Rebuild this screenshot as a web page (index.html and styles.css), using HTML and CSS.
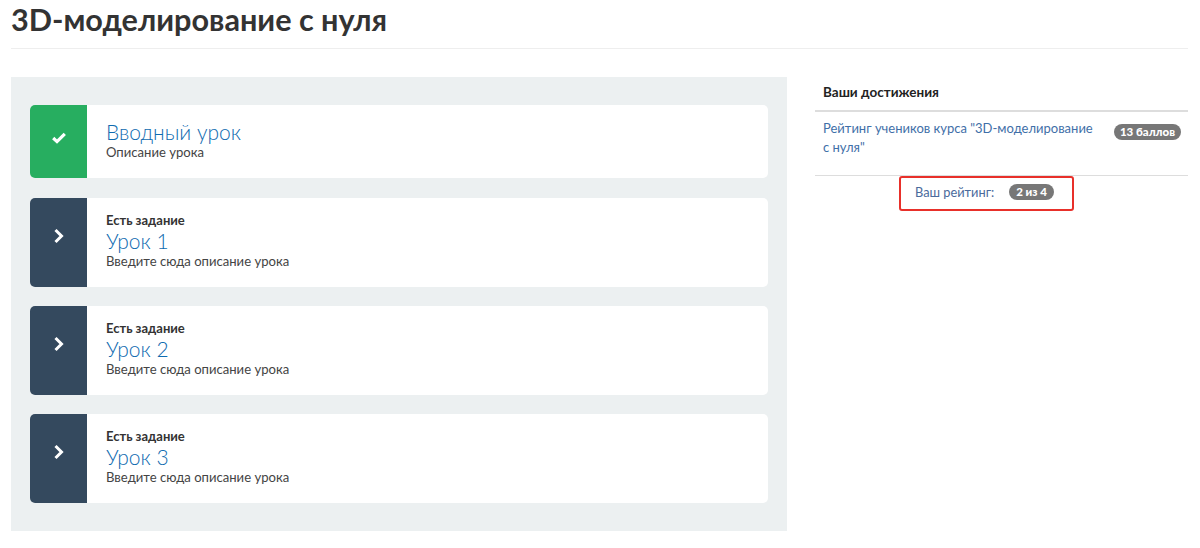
FILE: index.html
```html
<!DOCTYPE html>
<html lang="ru">
<head>
<meta charset="utf-8">
<title>3D-моделирование с нуля</title>
<link rel="stylesheet" href="styles.css">
</head>
<body>
<header class="page-header"><h1>3D-моделирование с нуля</h1></header>
<div class="columns">
  <main class="lessons">
    <a class="card">
      <span class="card-icon done"><svg width="14" height="12" viewBox="0 0 14 12"><path d="M1.2 6 5 9.6 12.8 1.8" fill="none" stroke="#fff" stroke-width="3.2"/></svg></span>
      <span class="card-body">
        <span class="card-title">Вводный урок</span>
        <span class="card-desc">Описание урока</span>
      </span>
    </a>
    <a class="card tall">
      <span class="card-icon"><svg width="12" height="16" viewBox="0 0 12 16"><path d="M2.5 2 8.5 8 2.5 14" fill="none" stroke="#fff" stroke-width="3"/></svg></span>
      <span class="card-body">
        <span class="card-task">Есть задание</span>
        <span class="card-title">Урок 1</span>
        <span class="card-desc">Введите сюда описание урока</span>
      </span>
    </a>
    <a class="card tall">
      <span class="card-icon"><svg width="12" height="16" viewBox="0 0 12 16"><path d="M2.5 2 8.5 8 2.5 14" fill="none" stroke="#fff" stroke-width="3"/></svg></span>
      <span class="card-body">
        <span class="card-task">Есть задание</span>
        <span class="card-title">Урок 2</span>
        <span class="card-desc">Введите сюда описание урока</span>
      </span>
    </a>
    <a class="card tall">
      <span class="card-icon"><svg width="12" height="16" viewBox="0 0 12 16"><path d="M2.5 2 8.5 8 2.5 14" fill="none" stroke="#fff" stroke-width="3"/></svg></span>
      <span class="card-body">
        <span class="card-task">Есть задание</span>
        <span class="card-title">Урок 3</span>
        <span class="card-desc">Введите сюда описание урока</span>
      </span>
    </a>
  </main>
  <aside class="side">
    <div class="side-head">Ваши достижения</div>
    <div class="side-row">
      <a class="side-link">Рейтинг учеников курса <span class="nowrap">"3D-моделирование</span> с нуля"</a>
      <span class="badge">13 баллов</span>
    </div>
    <div class="rating-wrap">
      <div class="rating">
        <span class="rating-label">Ваш рейтинг:</span>
        <span class="badge small">2 из 4</span>
      </div>
    </div>
  </aside>
</div>
</body>
</html>
```
FILE: styles.css
```css
* { box-sizing: border-box; }
html, body { margin: 0; background: #fff; }
body {
  padding: 0 12px 0 11px;
  height: 548px;
  overflow: hidden;
  font-family: "Lato", "Open Sans", "Noto Sans", sans-serif;
  color: #333;
}
.page-header {
  height: 49px;
  border-bottom: 1px solid #eeeeee;
}
h1 {
  margin: 0;
  padding-top: 2px;
  font-size: 30.6px;
  line-height: 36px;
  font-weight: 700;
  color: #333;
}
.columns {
  display: flex;
  margin-top: 28px;
  gap: 28px;
}
.lessons {
  width: 776px;
  height: 454px;
  flex: none;
  background: #ecf0f1;
  padding: 28px 19px;
  display: flex;
  flex-direction: column;
  gap: 19px;
}
.card {
  display: flex;
  height: 73px;
  background: #fff;
  border-radius: 5px;
  overflow: hidden;
}
.card:first-child { margin-bottom: 1px; }
.card.tall { height: 89px; }
.card-icon {
  flex: none;
  width: 57px;
  background: #34495e;
  display: flex;
  align-items: center;
  justify-content: center;
  padding-bottom: 13px;
}
.card-icon.done { background: #27ae60; padding-bottom: 8px; }
.card-body {
  display: flex;
  flex-direction: column;
  justify-content: center;
  padding-left: 19px;
  padding-bottom: 3px;
}
.card:first-child .card-body { padding-bottom: 5px; }
.card-task {
  font-size: 13px;
  line-height: 15px;
  font-weight: 700;
  color: #333;
}
.card-title {
  font-size: 21px;
  line-height: 25px;
  font-weight: 300;
  color: #0f6bb0;
  margin-bottom: 1px;
}
.card-desc {
  font-size: 13.1px;
  line-height: 15px;
  color: #444;
}
.side { width: 373px; flex: none; }
.side-head {
  height: 35px;
  padding: 6px 8px 0;
  font-size: 13.5px;
  line-height: 18px;
  font-weight: 700;
  color: #222;
  border-bottom: 2px solid #ddd;
}
.side-row {
  display: flex;
  justify-content: space-between;
  align-items: flex-start;
  height: 64px;
  padding: 7px 7px 0 8px;
  border-bottom: 1px solid #ddd;
}
.side-link {
  width: 272px;
  font-size: 13px;
  line-height: 19px;
  color: #3f6fa8;
}
.nowrap { white-space: nowrap; }
.badge {
  margin-top: 5px;
  background: #777;
  color: #fff;
  font-size: 11.5px;
  line-height: 12px;
  font-weight: 900;
  padding: 2px 6px;
  border-radius: 10px;
  white-space: nowrap;
}
.rating-wrap { display: flex; justify-content: center; padding-right: 30px; }
.rating {
  width: 175px;
  height: 35px;
  border: 2px solid #e8302a;
  border-radius: 3px;
  display: flex;
  align-items: center;
  gap: 15px;
  padding: 0 0 3px 14px;
}
.rating-label { font-size: 12.8px; color: #4a6a9c; }
.badge.small { margin-top: 0; padding: 2px 7px; }
```
